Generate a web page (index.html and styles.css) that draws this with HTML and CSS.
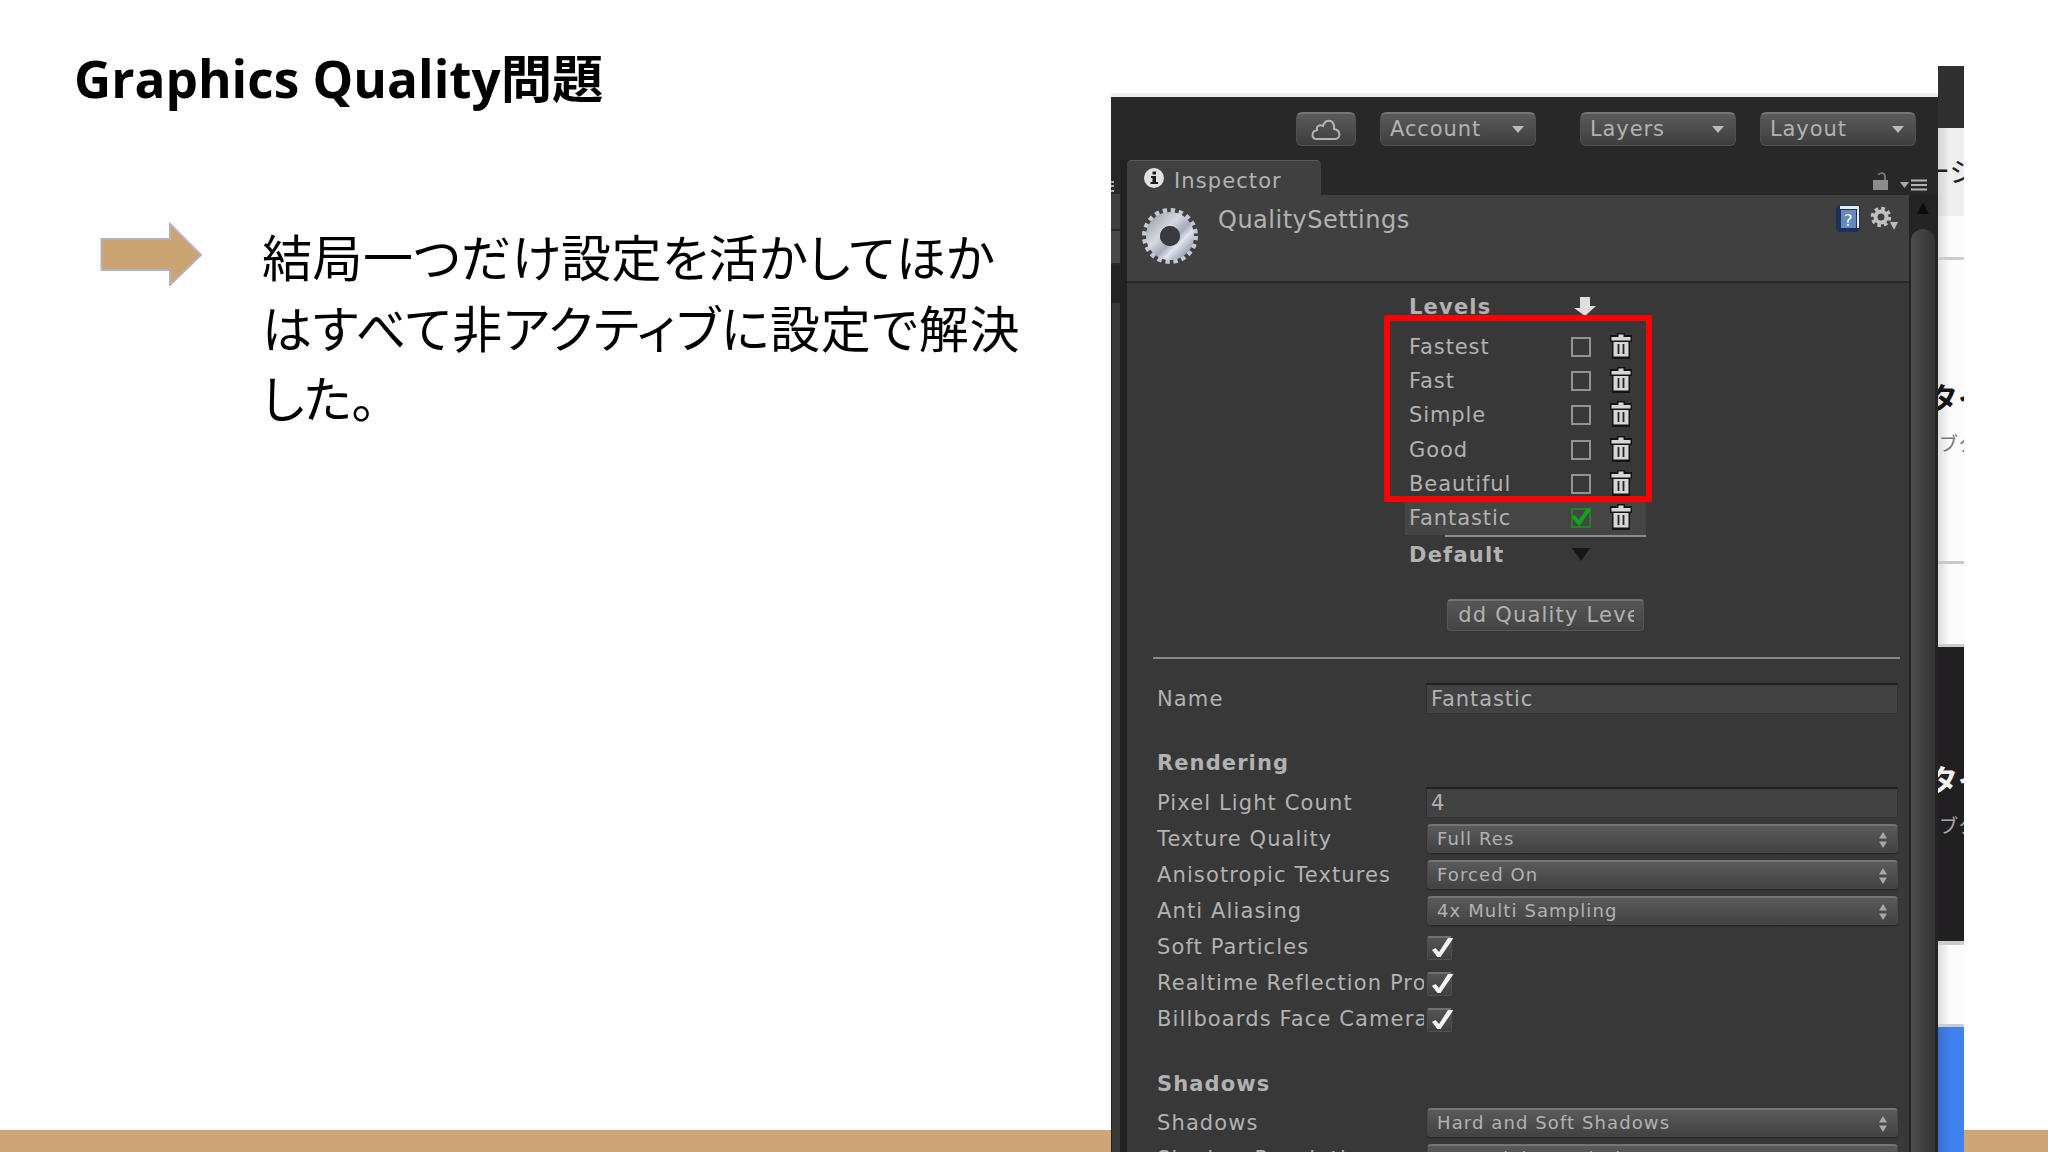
FILE: index.html
```html
<!DOCTYPE html>
<html lang="ja">
<head>
    <meta charset="UTF-8">
    <title>Graphics Quality問題</title>
    <link rel="stylesheet" href="styles.css">
</head>
<body>

<!-- shared icons -->
<svg class="defs" width="0" height="0">
    <symbol id="trash" viewBox="0 0 24 26">
        <path d="M8 0h8v2h7v7h-2v17H3V9H1V2h7z" fill="#141414"/>
        <path d="M9.500 1.500h5v2.500h7v3.500H2.500V4h7zM4.500 9h15v14.500h-15z" fill="#d6d6d6"/>
        <path d="M9.500 11v10M14.500 11v10" stroke="#222" stroke-width="1.800"/>
    </symbol>
    <symbol id="check" viewBox="0 0 26 28">
        <path d="M4 15l3.500-2 3.500 4L20 3h5.500L12.500 22h-3z" fill="#f4f4f4"/>
    </symbol>
    <symbol id="updown" viewBox="0 0 10 16">
        <path d="M5 0l4 6.500H1zM5 16l4-6.500H1z" fill="#a8a8a8"/>
    </symbol>
</svg>

<div class="slide">
    <div class="notes">
        <h1>Graphics Quality問題</h1>
        <div class="point">
            <svg class="arrow" width="104" height="64" viewBox="0 0 104 64">
                <path d="M1.500 17H70V2l31 31-31 30V48H1.500z" fill="#cba473" stroke="#b4b4b8" stroke-width="2"/>
            </svg>
            <p>
                <span class="line line-1">結局一つだけ設定を活かしてほか</span>
                <span class="line line-2">はすべて非アクティブに設定で解決</span>
                <span class="line line-3">した。</span>
            </p>
        </div>
    </div>

    <div class="unity">
        <div class="toolbar">
            <div class="tool cloud">
                <svg width="30" height="22" viewBox="0 0 30 22"><path d="M6 20C0 20 0 12 6 11C5 7 9 5 12 7C14 0 22 0 23 7V10C30 11 30 20 24 20Z" fill="none" stroke="#b4b4b4" stroke-width="2"/></svg>
            </div>
            <div class="tool account">Account<i class="down"></i></div>
            <div class="tool layers">Layers<i class="down"></i></div>
            <div class="tool">Layout<i class="down"></i></div>
        </div>

        <div class="workspace">
            <div class="neighbour">
                <div class="burger"></div>
                <div class="cell"></div>
                <div class="cell second"></div>
                <div class="rest"></div>
            </div>
            <div class="inspector">
                <div class="tabs">
                    <div class="tab">
                        <svg width="20" height="20" viewBox="0 0 20 20"><circle cx="10" cy="10" r="10" fill="#e2e2e2"/><path d="M8.500 3.500h3.500v3H8.500zM7 8h5v6h2v2H6.500v-2h2v-4H7z" fill="#1c1c1c"/></svg>
                        <span>Inspector</span>
                    </div>
                    <svg class="lock" width="58" height="22" viewBox="0 0 58 22">
                        <path d="M2 9h15v10H2z" fill="#8c8c8c"/>
                        <path d="M7 3.500Q13 0 14 5v4" fill="none" stroke="#7a7a7a" stroke-width="1.800"/>
                        <path d="M29 11h9l-4.500 6z" fill="#aaa"/>
                        <path d="M40 9.500h16M40 14h16M40 18.500h16" stroke="#b4b4b4" stroke-width="2"/>
                    </svg>
                </div>
                <div class="content">
                    <div class="main">
                        <div class="header">
                            <svg class="gear" width="58" height="58" viewBox="0 0 58 58">
                                <defs><linearGradient id="steel" x1="0" y1="0" x2="1" y2="1"><stop offset="0" stop-color="#aaaeb5"/><stop offset=".35" stop-color="#d5d9e0"/><stop offset=".6" stop-color="#a4adbd"/><stop offset=".75" stop-color="#e0e5ee"/><stop offset="1" stop-color="#98a2b5"/></linearGradient></defs>
                                <circle cx="29" cy="29" r="25.500" fill="none" stroke="#c3c8d2" stroke-width="5" stroke-dasharray="4.300 3.711"/>
                                <circle cx="29" cy="29" r="17" fill="none" stroke="url(#steel)" stroke-width="14"/>
                                <circle cx="29" cy="29" r="10" fill="#383a3e"/>
                            </svg>
                            <span class="title">QualitySettings</span>
                            <svg class="help" width="66" height="32" viewBox="0 0 66 32">
                                <path d="M1 3L4 1H25V26L22 28H3L1 26z" fill="#202f58"/>
                                <path d="M5 2H24V24H22V5H5z" fill="#e6edf8"/>
                                <path d="M6 6H21V24H6z" fill="#6688bd"/>
                                <text x="9" y="22" class="mark">?</text>
                                <circle cx="46" cy="13" r="8.500" fill="none" stroke="#c0c0c0" stroke-width="3.500" stroke-dasharray="3.600 3.076"/>
                                <circle cx="46" cy="13" r="5.500" fill="none" stroke="#c0c0c0" stroke-width="4"/>
                                <path d="M55 18h8l-4 8z" fill="#bbb"/>
                            </svg>
                        </div>

                        <div class="levels">
                            <div class="level head"><b>Levels</b>
                                <svg class="platform" width="22" height="20" viewBox="0 0 22 20"><path d="M6 0h10v9h6L11 19 0 11h6z" fill="#dedede"/></svg>
                            </div>
                            <div class="level"><span>Fastest</span><i class="box"></i><svg class="bin"><use href="#trash"/></svg></div>
                            <div class="level"><span>Fast</span><i class="box"></i><svg class="bin"><use href="#trash"/></svg></div>
                            <div class="level"><span>Simple</span><i class="box"></i><svg class="bin"><use href="#trash"/></svg></div>
                            <div class="level"><span>Good</span><i class="box"></i><svg class="bin"><use href="#trash"/></svg></div>
                            <div class="level"><span>Beautiful</span><i class="box"></i><svg class="bin"><use href="#trash"/></svg></div>
                            <div class="level current"><span>Fantastic</span><i class="box on"><svg width="20" height="20" viewBox="0 0 20 20"><path d="M2 8l6 7L18 1" fill="none" stroke="#12a51c" stroke-width="4"/></svg></i><svg class="bin"><use href="#trash"/></svg></div>
                            <div class="level default"><b>Default</b><i class="triangle"></i></div>
                            <div class="highlight"></div>
                        </div>
                        <div class="add"><span>Add Quality Level</span></div>

                        <div class="props">
                            <div class="row name"><label>Name</label><div class="field">Fantastic</div></div>
                            <h2>Rendering</h2>
                            <div class="row"><label>Pixel Light Count</label><div class="field">4</div></div>
                            <div class="row"><label>Texture Quality</label><div class="popup">Full Res<svg><use href="#updown"/></svg></div></div>
                            <div class="row"><label>Anisotropic Textures</label><div class="popup">Forced On<svg><use href="#updown"/></svg></div></div>
                            <div class="row"><label>Anti Aliasing</label><div class="popup">4x Multi Sampling<svg><use href="#updown"/></svg></div></div>
                            <div class="row"><label>Soft Particles</label><div class="toggle"><svg><use href="#check"/></svg></div></div>
                            <div class="row"><label>Realtime Reflection Pro</label><div class="toggle"><svg><use href="#check"/></svg></div></div>
                            <div class="row"><label>Billboards Face Camera</label><div class="toggle"><svg><use href="#check"/></svg></div></div>
                            <h2 class="shadows">Shadows</h2>
                            <div class="row"><label>Shadows</label><div class="popup">Hard and Soft Shadows<svg><use href="#updown"/></svg></div></div>
                            <div class="row"><label>Shadow Resolution</label><div class="popup">Very High Resolution<svg><use href="#updown"/></svg></div></div>
                        </div>
                    </div>
                    <div class="scrollbar">
                        <i class="up"></i>
                        <div class="thumb"></div>
                    </div>
                </div>
            </div>
        </div>
    </div>

    <!-- sliver of the browser window behind the editor -->
    <div class="browser">
        <div class="bar"></div>
        <div class="address"><span>ージ</span></div>
        <div class="gap"></div>
        <div class="card"><b>タイ</b><small>ブク</small></div>
        <div class="between"></div>
        <div class="card dark"><b>タイ</b><small>ブク</small></div>
        <div class="between after"></div>
        <div class="blue"></div>
    </div>
    <div class="footer"></div>
</div>

</body>
</html>
```
FILE: styles.css
```css
* {
    box-sizing: border-box;
}
body {
    margin: 0;
    background: #fff;
}
.defs {
    position: absolute;
}
.slide {
    position: relative;
    display: flex;
    height: 1152px;
    overflow: hidden;
}
.footer {
    position: absolute;
    left: 0;
    right: 0;
    bottom: 0;
    height: 22px;
    background: #cda576;
}

/* left side */
.notes {
    width: 1111px;
    padding: 42px 0 0 74px;
    color: #000;
}
h1 {
    margin: 0;
    font: bold 51.3px/72px "Open Sans", "Noto Sans CJK JP", sans-serif;
    white-space: nowrap;
}
.point {
    display: flex;
    margin-top: 108px;
    padding-left: 26px;
}
.arrow {
    flex: none;
}
.point p {
    margin: -2px 0 0 58px;
    font: 50px/70.5px "Noto Sans CJK JP", sans-serif;
    font-feature-settings: "palt";
}
.line {
    display: block;
    white-space: nowrap;
}
.line-1 {
    letter-spacing: 0.45px;
}
.line-2 {
    letter-spacing: 0.85px;
}
.line-3 {
    letter-spacing: -0.5px;
}

/* unity editor window */
.unity {
    z-index: 1;
    display: flex;
    flex-direction: column;
    width: 827px;
    height: 1059px;
    margin-top: 93px;
    border-top: 4px solid #eee;
    background: #282828;
    color: #b2b2b2;
    font: 21px/36px "DejaVu Sans", sans-serif;
    letter-spacing: 0.9px;
    overflow: hidden;
    white-space: nowrap;
}
.toolbar {
    display: flex;
    flex: none;
    justify-content: flex-end;
    gap: 24px;
    height: 63px;
    padding: 15px 22px 0 0;
}
.tool {
    display: flex;
    align-items: center;
    justify-content: space-between;
    width: 156px;
    height: 34px;
    padding: 0 11px 1px 9px;
    border: 1px solid #505050;
    border-top: 2px solid #747474;
    border-radius: 6px;
    background: linear-gradient(#5a5a5a, #3e3e3e);
}
.tool.cloud {
    justify-content: center;
    width: 60px;
    padding: 0;
}
.account {
    margin-right: 20px;
}
.down {
    border: 6px solid transparent;
    border-top: 7px solid #bbb;
    border-bottom: 0;
}
.workspace {
    display: flex;
    flex: 1;
}
.neighbour {
    width: 16px;
    border-right: 7px solid #222;
}
.burger {
    width: 3px;
    height: 11px;
    margin: 21px 0 2px;
    background: repeating-linear-gradient(#aaa 0 2px, #282828 2px 4.5px);
}
.cell {
    height: 37px;
    border-bottom: 2px solid #292929;
    background: #3e3e3e;
}
.cell.second {
    height: 34px;
    background: #484848;
}
.rest {
    height: 900px;
    border-left: 1px solid #222;
    background: #393939;
    border-top: 38px solid #252527;
}
.inspector {
    width: 811px;
}
.tabs {
    display: flex;
    justify-content: space-between;
    height: 35px;
    padding-right: 9px;
}
.tab {
    display: flex;
    align-items: center;
    gap: 10px;
    width: 194px;
    padding: 5px 0 0 17px;
    border-top: 1px solid #595959;
    border-radius: 5px 5px 0 0;
    background: #404040;
}
.tab span {
    letter-spacing: 1.1px;
}
.tab svg {
    margin-top: -6px;
}
.lock {
    margin-top: 11px;
}
.content {
    display: flex;
}
.main {
    width: 782px;
    height: 958px;
    background: #383839;
}
.header {
    display: flex;
    height: 88px;
    border-bottom: 2px solid #292929;
    background: #404041;
}
.gear {
    margin: 12px 0 0 14px;
}
.title {
    margin: 8px 0 0 19px;
    font-size: 24px;
    letter-spacing: 0.5px;
    line-height: 34px;
}
.help {
    margin: 9px 8px 0 auto;
}
.mark {
    font: 16px "DejaVu Sans", sans-serif;
    fill: #fff;
}

/* quality levels matrix */
.levels {
    position: relative;
    width: 241px;
    margin-left: 278px;
}
.level {
    display: grid;
    grid-template-columns: 162px 40px 27px;
    align-items: center;
    height: 34.2px;
    padding-left: 4px;
}
.level b {
    letter-spacing: 1.2px;
}
.level.head {
    height: 46px;
    padding-top: 2px;
}
.platform {
    margin: 0 0 0 3px;
}
.box {
    width: 20px;
    height: 20px;
    border: 2px solid #939393;
}
.box.on {
    border-color: #287c2c;
}
.box.on svg {
    display: block;
    margin: -2px;
}
.bin {
    width: 24px;
    height: 26px;
    margin: -2px 0 0 -2px;
}
.level.current {
    height: 35px;
    padding-bottom: 2px;
    background: #454546;
}
.level.default {
    height: 35px;
    padding-top: 2px;
    background: linear-gradient(#8c8c8c, #8c8c8c) 40px 0 / 201px 2px no-repeat;
}
.triangle {
    border: 9px solid transparent;
    border-top: 13px solid #161616;
    border-bottom: 0;
    width: 0;
    margin-left: 1px;
}
.highlight {
    position: absolute;
    left: -21px;
    top: 32px;
    width: 268px;
    height: 187px;
    border: 6px solid #f00;
    border-radius: 2px;
}
.add {
    display: flex;
    width: 197px;
    height: 32px;
    margin: 29px 0 0 320px;
    padding: 0 9px;
    border: 1px solid #565656;
    border-top: 2px solid #727272;
    border-radius: 4px;
    background: linear-gradient(#565656, #434343);
    line-height: 28px;
    letter-spacing: 1.2px;
}
.add span {
    display: flex;
    justify-content: center;
    width: 100%;
    overflow: hidden;
}

/* property rows */
.props {
    margin: 26px 9px 0 26px;
    border-top: 2px solid #888;
}
.row {
    display: flex;
    align-items: center;
    height: 36px;
    padding: 0 2px 0 4px;
}
.row.name {
    margin-top: 22px;
}
.row label {
    flex: none;
    width: 267px;
    margin-right: 2px;
    overflow: hidden;
    letter-spacing: 1.12px;
}
h2 {
    margin: 28px 0 4px 4px;
    font-size: 21px;
    letter-spacing: 1.1px;
}
h2.shadows {
    margin: 29px 0 3px 4px;
}
.field {
    flex: 1;
    height: 31px;
    padding-left: 4px;
    border: 1px solid #303030;
    border-top: 2px solid #202020;
    background: #424243;
    line-height: 29px;
}
.popup {
    display: flex;
    flex: 1;
    align-items: center;
    justify-content: space-between;
    height: 29px;
    margin: 0 0 0 1px;
    padding: 0 9px 1px 9px;
    border: 1px solid #4a4a4a;
    border-top: 2px solid #747474;
    border-radius: 4px;
    background: linear-gradient(#5a5a5b, #424243);
    box-shadow: 0 1px 1px #242424;
    font-size: 18px;
    letter-spacing: 1.1px;
}
.popup svg {
    width: 10px;
    height: 16px;
    margin-top: 2px;
}
.toggle {
    width: 25px;
    height: 24px;
    margin: 3px 0 0 1px;
    border: 1px solid #4e4e4e;
    border-top: 2px solid #707070;
    border-radius: 2px;
    background: linear-gradient(#545454, #404040);
}
.toggle svg {
    display: block;
    width: 26px;
    height: 28px;
    margin-top: -3px;
}
.scrollbar {
    width: 29px;
    padding: 13px 3px 0 2px;
    background: #242424;
}
.up {
    display: block;
    width: 0;
    margin: -6px 0 0 6px;
    border: 6px solid transparent;
    border-bottom: 12px solid #0d0d0d;
    border-top: 0;
}
.thumb {
    height: 960px;
    margin-top: 15px;
    border-radius: 12px 12px 0 0;
    background: linear-gradient(90deg, #4c4c4d, #343435);
}

/* browser behind */
.browser {
    z-index: 1;
    width: 26px;
    margin-top: 66px;
    overflow: hidden;
    background: linear-gradient(90deg, #ddd, #fcfcfc 12px);
    font-family: "Noto Sans CJK JP", sans-serif;
    white-space: nowrap;
}
.bar {
    height: 62px;
    background: #303030;
}
.address {
    height: 88px;
    padding-top: 23px;
    background: linear-gradient(90deg, #d4d4d4, #efefee 12px);
    color: #222;
    font-size: 28px;
    line-height: 38px;
}
.address span {
    margin-left: -16px;
}
.gap {
    height: 44px;
    border-bottom: 3px solid #ccc;
}
.card {
    height: 304px;
    padding-top: 112px;
    border-bottom: 3px solid #c8c8c8;
    color: #111;
}
.card b, .card small {
    display: block;
    margin-left: -10px;
    font-size: 30px;
    line-height: 48px;
}
.card small {
    margin-left: 1px;
    color: #777;
    font-size: 19px;
    line-height: 46px;
}
.between {
    height: 83px;
    border-bottom: 3px solid #ccc;
}
.card.dark {
    height: 294px;
    padding-top: 107px;
    border: 0;
    background: #211f22;
    color: #f2f2f2;
}
.card.dark small {
    color: #aaa;
}
.between.after {
    height: 86px;
    border-top: 4px solid #ccc;
}
.blue {
    height: 125px;
    background: linear-gradient(90deg, #3a70cc, #4083f0 14px);
}
```
